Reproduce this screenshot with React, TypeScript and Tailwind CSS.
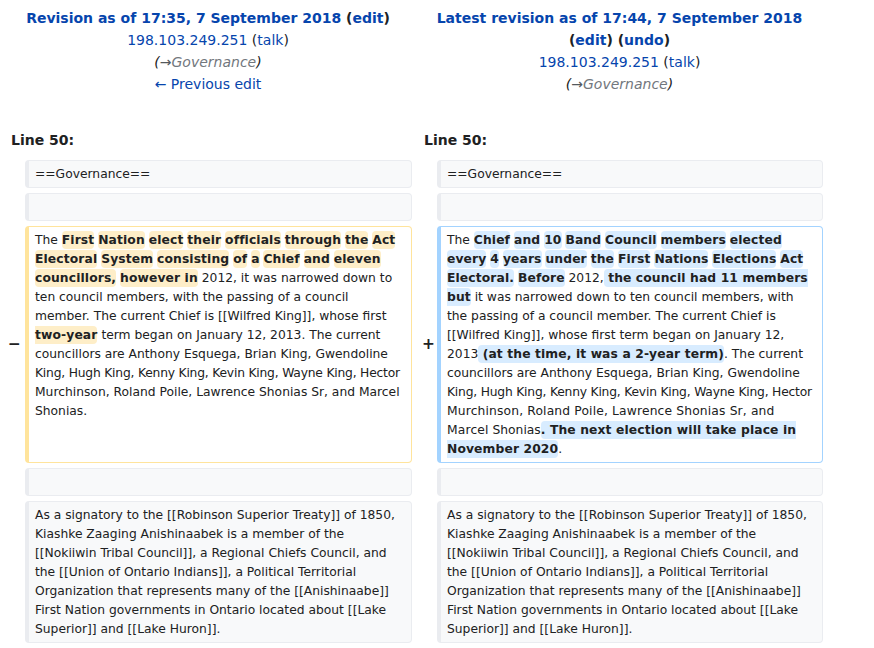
import React from "react";

const box =
  "rounded-[4px] border border-l-[4px] px-[6px] py-[3.5px] text-[12.3px] leading-[19px] break-words";
const ctx = `${box} border-[#eaecf0] bg-[#f8f9fa]`;
const delBox = `${box} border-[#ffe49c] bg-white`;
const addBox = `${box} border-[#a3d3ff] bg-white`;

const delMark = "rounded-[4px] bg-[#feeec8] py-[2px] font-bold tracking-[0.12px]";
const addMark = "rounded-[4px] bg-[#d8ecff] py-[2px] font-bold tracking-[0.12px]";

// separate highlighted words, plain spaces between them
function words(list: string[], cls: string) {
  return list.flatMap((w, i) => {
    const el = (
      <span key={w + i} className={cls}>
        {w}
      </span>
    );
    return i === 0 ? [el] : [" ", el];
  });
}

function Comment() {
  return (
    <div className="italic">
      <span className="text-[#202122]">(</span>
      <span className="text-[#54595d]">→</span>
      <span className="text-[#72777d]">Governance</span>
      <span className="text-[#202122]">)</span>
    </div>
  );
}

function User() {
  return (
    <div>
      <a className="text-[#0645ad]">198.103.249.251</a> (
      <a className="text-[#0645ad]">talk</a>)
    </div>
  );
}

function Marker({ sign }: { sign?: string }) {
  return (
    <div className="flex items-center justify-end text-[15.4px] font-bold leading-none text-[#202122]">
      {sign}
    </div>
  );
}

// the names line sits a touch tighter in the reference
function Names() {
  return (
    <span className="tracking-[-0.2px]">
      King, Hugh King, Kenny King, Kevin King, Wayne King, Hector
    </span>
  );
}

const governance = "==Governance==";
const treaty =
  "As a signatory to the [[Robinson Superior Treaty]] of 1850, Kiashke Zaaging Anishinaabek is a member of the [[Nokiiwin Tribal Council]], a Regional Chiefs Council, and the [[Union of Ontario Indians]], a Political Territorial Organization that represents many of the [[Anishinaabe]] First Nation governments in Ontario located about [[Lake Superior]] and [[Lake Huron]].";

export default function App() {
  return (
    <div className="min-h-screen bg-white font-['DejaVu_Sans','Liberation_Sans',sans-serif] text-[#202122]">
      <div className="grid w-[827px] grid-cols-[17px_387px_17px_386px] gap-x-[4px] gap-y-[5px] px-[4px] pt-[7px]">
        {/* revision headers */}
        <div className="col-span-2 text-center text-[14px] leading-[22px]">
          <div className="font-bold">
            <a className="text-[#0645ad]">Revision as of 17:35, 7 September 2018</a> (
            <a className="text-[#0645ad]">edit</a>)
          </div>
          <User />
          <Comment />
          <div>
            <a className="text-[#0645ad]">← Previous edit</a>
          </div>
        </div>
        <div className="col-span-2 text-center text-[14px] leading-[22px]">
          <div className="font-bold">
            <a className="text-[#0645ad]">Latest revision as of 17:44, 7 September 2018</a> (
            <a className="text-[#0645ad]">edit</a>) (<a className="text-[#0645ad]">undo</a>)
          </div>
          <User />
          <Comment />
        </div>

        {/* line numbers */}
        <div className="col-span-2 pt-[29px] pb-[4px] pl-[7px] text-[14px] font-bold leading-[22px]">
          Line 50:
        </div>
        <div className="col-span-2 pt-[29px] pb-[4px] pl-[8px] text-[14px] font-bold leading-[22px]">
          Line 50:
        </div>

        {/* context */}
        <Marker />
        <div className={ctx}>{governance}</div>
        <Marker />
        <div className={ctx}>{governance}</div>

        <Marker />
        <div className={ctx}>{"\u00a0"}</div>
        <Marker />
        <div className={ctx}>{"\u00a0"}</div>

        {/* changed paragraph */}
        <Marker sign="−" />
        <div className={delBox}>
          The{" "}
          {words(
            [
              "First",
              "Nation",
              "elect",
              "their",
              "officials",
              "through",
              "the",
              "Act",
              "Electoral",
              "System",
              "consisting",
              "of",
              "a",
              "Chief",
              "and",
              "eleven",
              "councillors,",
              "however in",
            ],
            delMark
          )}{" "}
          2012, it was narrowed down to ten council members, with the passing of a council
          member. The current Chief is [[Wilfred King]], whose first
          <span className={delMark}> two-year</span> term began on January 12, 2013. The
          current councillors are Anthony Esquega, Brian King, Gwendoline <Names /> Murchinson,
          Roland Poile, Lawrence Shonias Sr, and Marcel Shonias.
        </div>
        <div className="flex items-center justify-end pl-[3px] text-[15.4px] font-bold leading-none text-[#202122]">
          <span className="translate-x-[2px]">+</span>
        </div>
        <div className={addBox}>
          The{" "}
          {words(
            [
              "Chief",
              "and",
              "10",
              "Band",
              "Council",
              "members",
              "elected",
              "every",
              "4",
              "years",
              "under",
              "the",
              "First",
              "Nations",
              "Elections",
              "Act",
              "Electoral.",
              "Before",
            ],
            addMark
          )}{" "}
          2012,<span className={addMark}> the council had 11 members but</span> it was
          narrowed down to ten council members, with the passing of a council member. The
          current Chief is [[Wilfred King]], whose first term began on January 12, 2013
          <span className={addMark}> (at the time, it was a 2-year term)</span>. The current
          councillors are Anthony Esquega, Brian King, Gwendoline <Names />{" "}
          <span className="tracking-[0.15px]">
            Murchinson, Roland Poile, Lawrence Shonias Sr, and Marcel
          </span>{" "}
          Shonias
          <span className={addMark}>. The next election will take place in November 2020</span>.
        </div>

        {/* context */}
        <Marker />
        <div className={ctx}>{"\u00a0"}</div>
        <Marker />
        <div className={ctx}>{"\u00a0"}</div>

        <Marker />
        <div className={ctx}>{treaty}</div>
        <Marker />
        <div className={ctx}>{treaty}</div>
      </div>
    </div>
  );
}
